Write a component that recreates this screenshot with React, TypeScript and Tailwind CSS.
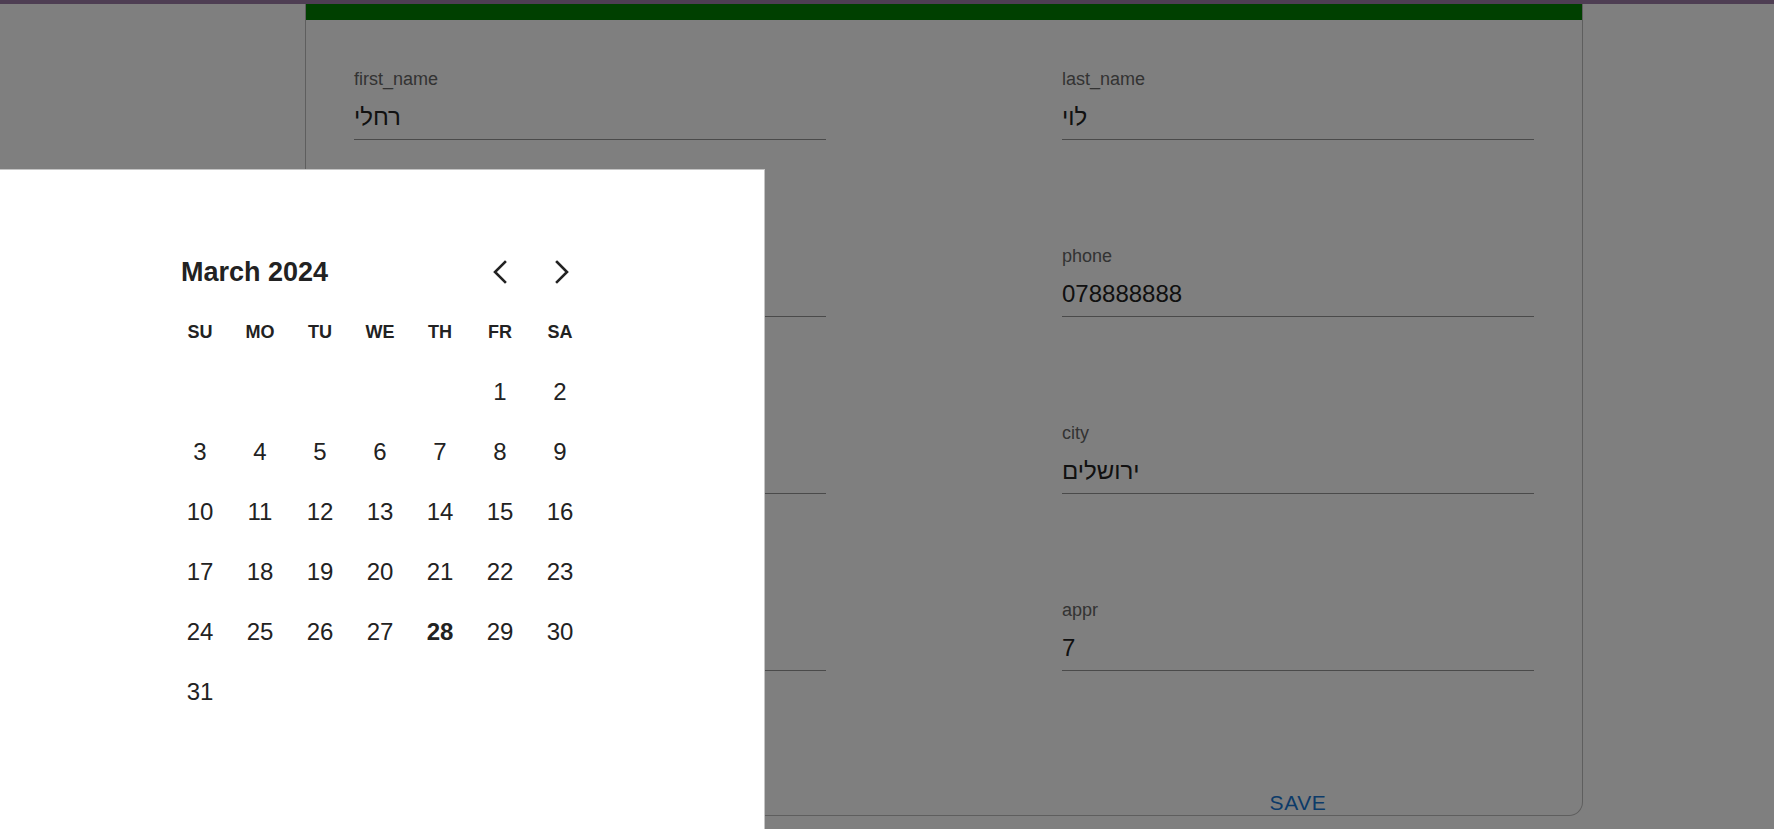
import React from 'react';

const FONT = { fontFamily: '"Liberation Sans", Arial, "DejaVu Sans", sans-serif' };

const LEFT_FIELDS = [
  { label: 'first_name', value: 'רחלי' },
  { label: 'email', value: '' },
  { label: 'birth_date', value: '' },
  { label: 'street', value: '' },
];

const RIGHT_FIELDS = [
  { label: 'last_name', value: 'לוי' },
  { label: 'phone', value: '078888888' },
  { label: 'city', value: 'ירושלים' },
  { label: 'appr', value: '7' },
];

const WEEKDAYS = ['SU', 'MO', 'TU', 'WE', 'TH', 'FR', 'SA'];

function Field({ label, value }: { label: string; value: string }) {
  return (
    <div className="w-[472px]">
      <span className="block h-6 text-[18px] leading-[24px] text-[#666666]">{label}</span>
      <div className="pt-[9px] pb-[5px] border-b border-[#949494]">
        <div className="h-[34px] text-[24px] leading-[34px] text-[#222222]">{value}</div>
      </div>
    </div>
  );
}

function Chevron({ dir }: { dir: 'left' | 'right' }) {
  return (
    <button className="w-[44px] h-[44px] flex items-center justify-center text-[#222222]">
      <svg width="44" height="44" viewBox="0 0 44 44" fill="none" stroke="currentColor" strokeWidth="2.6" strokeLinecap="square">
        {dir === 'left' ? (
          <polyline points="28,12 18,22 28,32" />
        ) : (
          <polyline points="16,12 26,22 16,32" />
        )}
      </svg>
    </button>
  );
}

function Calendar() {
  // March 2024 starts on a Friday
  const cells: (number | null)[] = [null, null, null, null, null];
  for (let d = 1; d <= 31; d++) cells.push(d);
  const rows: (number | null)[][] = [];
  for (let i = 0; i < cells.length; i += 7) rows.push(cells.slice(i, i + 7));

  return (
    <div className="fixed left-0 top-[169px] bottom-0 w-[765px] bg-white border-t border-r border-[#c4c4c4] pl-[170px] pt-[80px]" style={FONT}>
      <div className="w-[420px]">
        <div className="h-[44px] flex items-center justify-between pl-[11px] pr-[5px]">
          <span className="text-[27px] leading-none font-bold text-[#222222]">March 2024</span>
          <div className="flex gap-[20px]">
            <Chevron dir="left" />
            <Chevron dir="right" />
          </div>
        </div>

        <div className="mt-[8px] grid grid-cols-7">
          {WEEKDAYS.map(w => (
            <div key={w} className="h-[60px] flex items-center justify-center text-[18px] font-bold text-[#222222]">
              {w}
            </div>
          ))}
        </div>

        {rows.map((row, ri) => (
          <div key={ri} className="grid grid-cols-7">
            {row.map((d, ci) => (
              <div
                key={ci}
                className={`h-[60px] flex items-center justify-center text-[24px] text-[#222222] ${d === 28 ? 'font-bold' : ''}`}
              >
                {d ?? ''}
              </div>
            ))}
          </div>
        ))}
      </div>
    </div>
  );
}

export default function App() {
  return (
    <div className="relative h-[829px] overflow-hidden bg-white" style={FONT}>
      {/* app bar bottom edge */}
      <div className="h-[4px] bg-[#9c7ca6]" />

      {/* form card */}
      <div className="ml-[305px] w-[1278px] border-x border-b border-[#bdbdbd] rounded-b-[14px] bg-white">
        <div className="h-4 bg-[#008000]" />
        <div className="px-[48px] pt-[47px]">
          <div className="grid grid-cols-[472px_472px] justify-between gap-y-[104px]">
            {LEFT_FIELDS.map((f, i) => (
              <React.Fragment key={f.label}>
                <Field label={f.label} value={f.value} />
                <Field label={RIGHT_FIELDS[i].label} value={RIGHT_FIELDS[i].value} />
              </React.Fragment>
            ))}
          </div>
          <div className="mt-[120px] flex justify-end">
            <div className="w-[472px] flex justify-center">
              <button className="text-[21px] leading-[24px] tracking-[0.6px] text-[#1976d2] uppercase">Save</button>
            </div>
          </div>
        </div>
      </div>

      {/* modal backdrop */}
      <div className="fixed inset-0 bg-black/50" />

      <Calendar />
    </div>
  );
}
